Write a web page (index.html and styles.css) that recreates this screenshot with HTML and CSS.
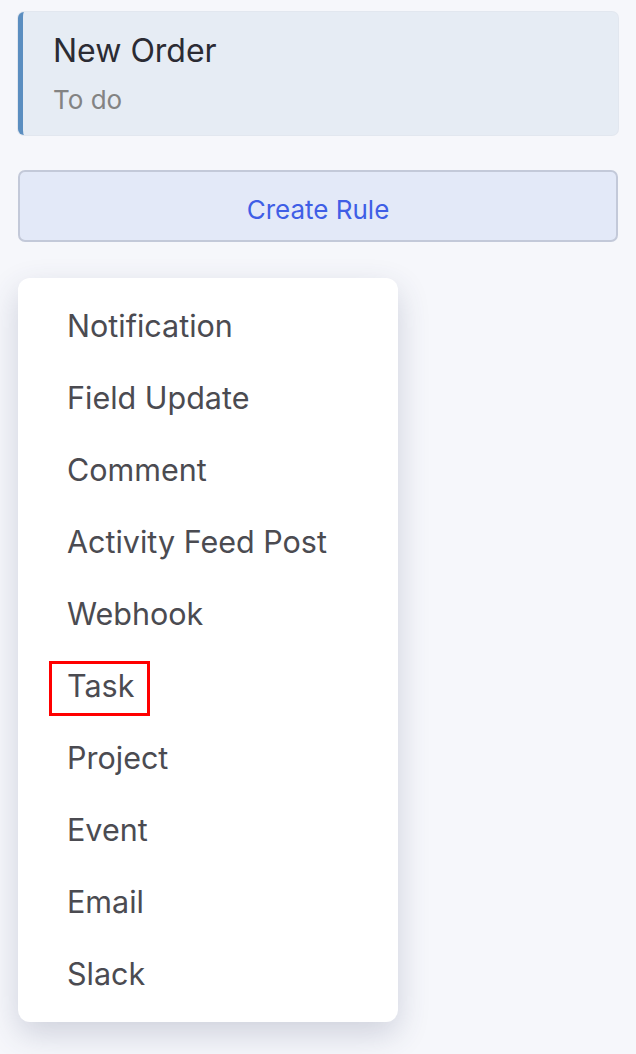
FILE: index.html
```html
<!DOCTYPE html>
<html>
<head>
<meta charset="utf-8">
<link rel="stylesheet" href="styles.css">
</head>
<body>
<div class="page">
  <div class="card">
    <div class="card-title">New Order</div>
    <div class="card-sub">To do</div>
  </div>
  <button class="create-btn">Create Rule</button>
  <ul class="menu">
    <li class="menu-item">Notification</li>
    <li class="menu-item">Field Update</li>
    <li class="menu-item">Comment</li>
    <li class="menu-item">Activity Feed Post</li>
    <li class="menu-item">Webhook</li>
    <li class="menu-item"><span class="highlight">Task</span></li>
    <li class="menu-item">Project</li>
    <li class="menu-item">Event</li>
    <li class="menu-item">Email</li>
    <li class="menu-item">Slack</li>
  </ul>
</div>
</body>
</html>
```
FILE: styles.css
```css
html, body {
  margin: 0;
  padding: 0;
  background: #f6f7fb;
  font-family: Inter, "Noto Sans", sans-serif;
}
.page {
  padding: 12px 18px 40px 18px;
  display: flex;
  flex-direction: column;
}
.card {
  box-sizing: border-box;
  height: 123px;
  background: #e6ecf4;
  border-radius: 6px;
  border-left: 5px solid #5b8ec0;
  padding: 19px 0 0 30px;
  box-shadow: 0 0 0 1px #e2e7ef;
}
.card-title {
  font-size: 32px;
  color: #2b2b33;
  line-height: 40px;
}
.card-sub {
  margin-top: 13px;
  font-size: 26px;
  color: #838383;
  line-height: 32px;
}
.create-btn {
  margin-top: 35px;
  height: 72px;
  box-sizing: border-box;
  border: 2px solid #c3c9d9;
  background: #e3e9f8;
  border-radius: 7px;
  color: #3f5ee6;
  font-family: Inter, "Noto Sans", sans-serif;
  font-size: 26px;
  padding: 6px 0 0 0;
}
.menu {
  list-style: none;
  margin: 36px 0 0 0;
  width: 380px;
  padding: 12px 0;
  background: #ffffff;
  border-radius: 12px;
  box-shadow: 0 12px 32px rgba(50, 60, 100, 0.2);
}
.menu-item {
  height: 72px;
  line-height: 72px;
  padding-left: 49px;
  font-size: 30.5px;
  color: #4b4b51;
}
.highlight {
  position: relative;
}
.highlight::after {
  content: "";
  position: absolute;
  left: -18px;
  right: -16px;
  top: -6px;
  bottom: -12px;
  border: 3px solid #ff0000;
}
```
